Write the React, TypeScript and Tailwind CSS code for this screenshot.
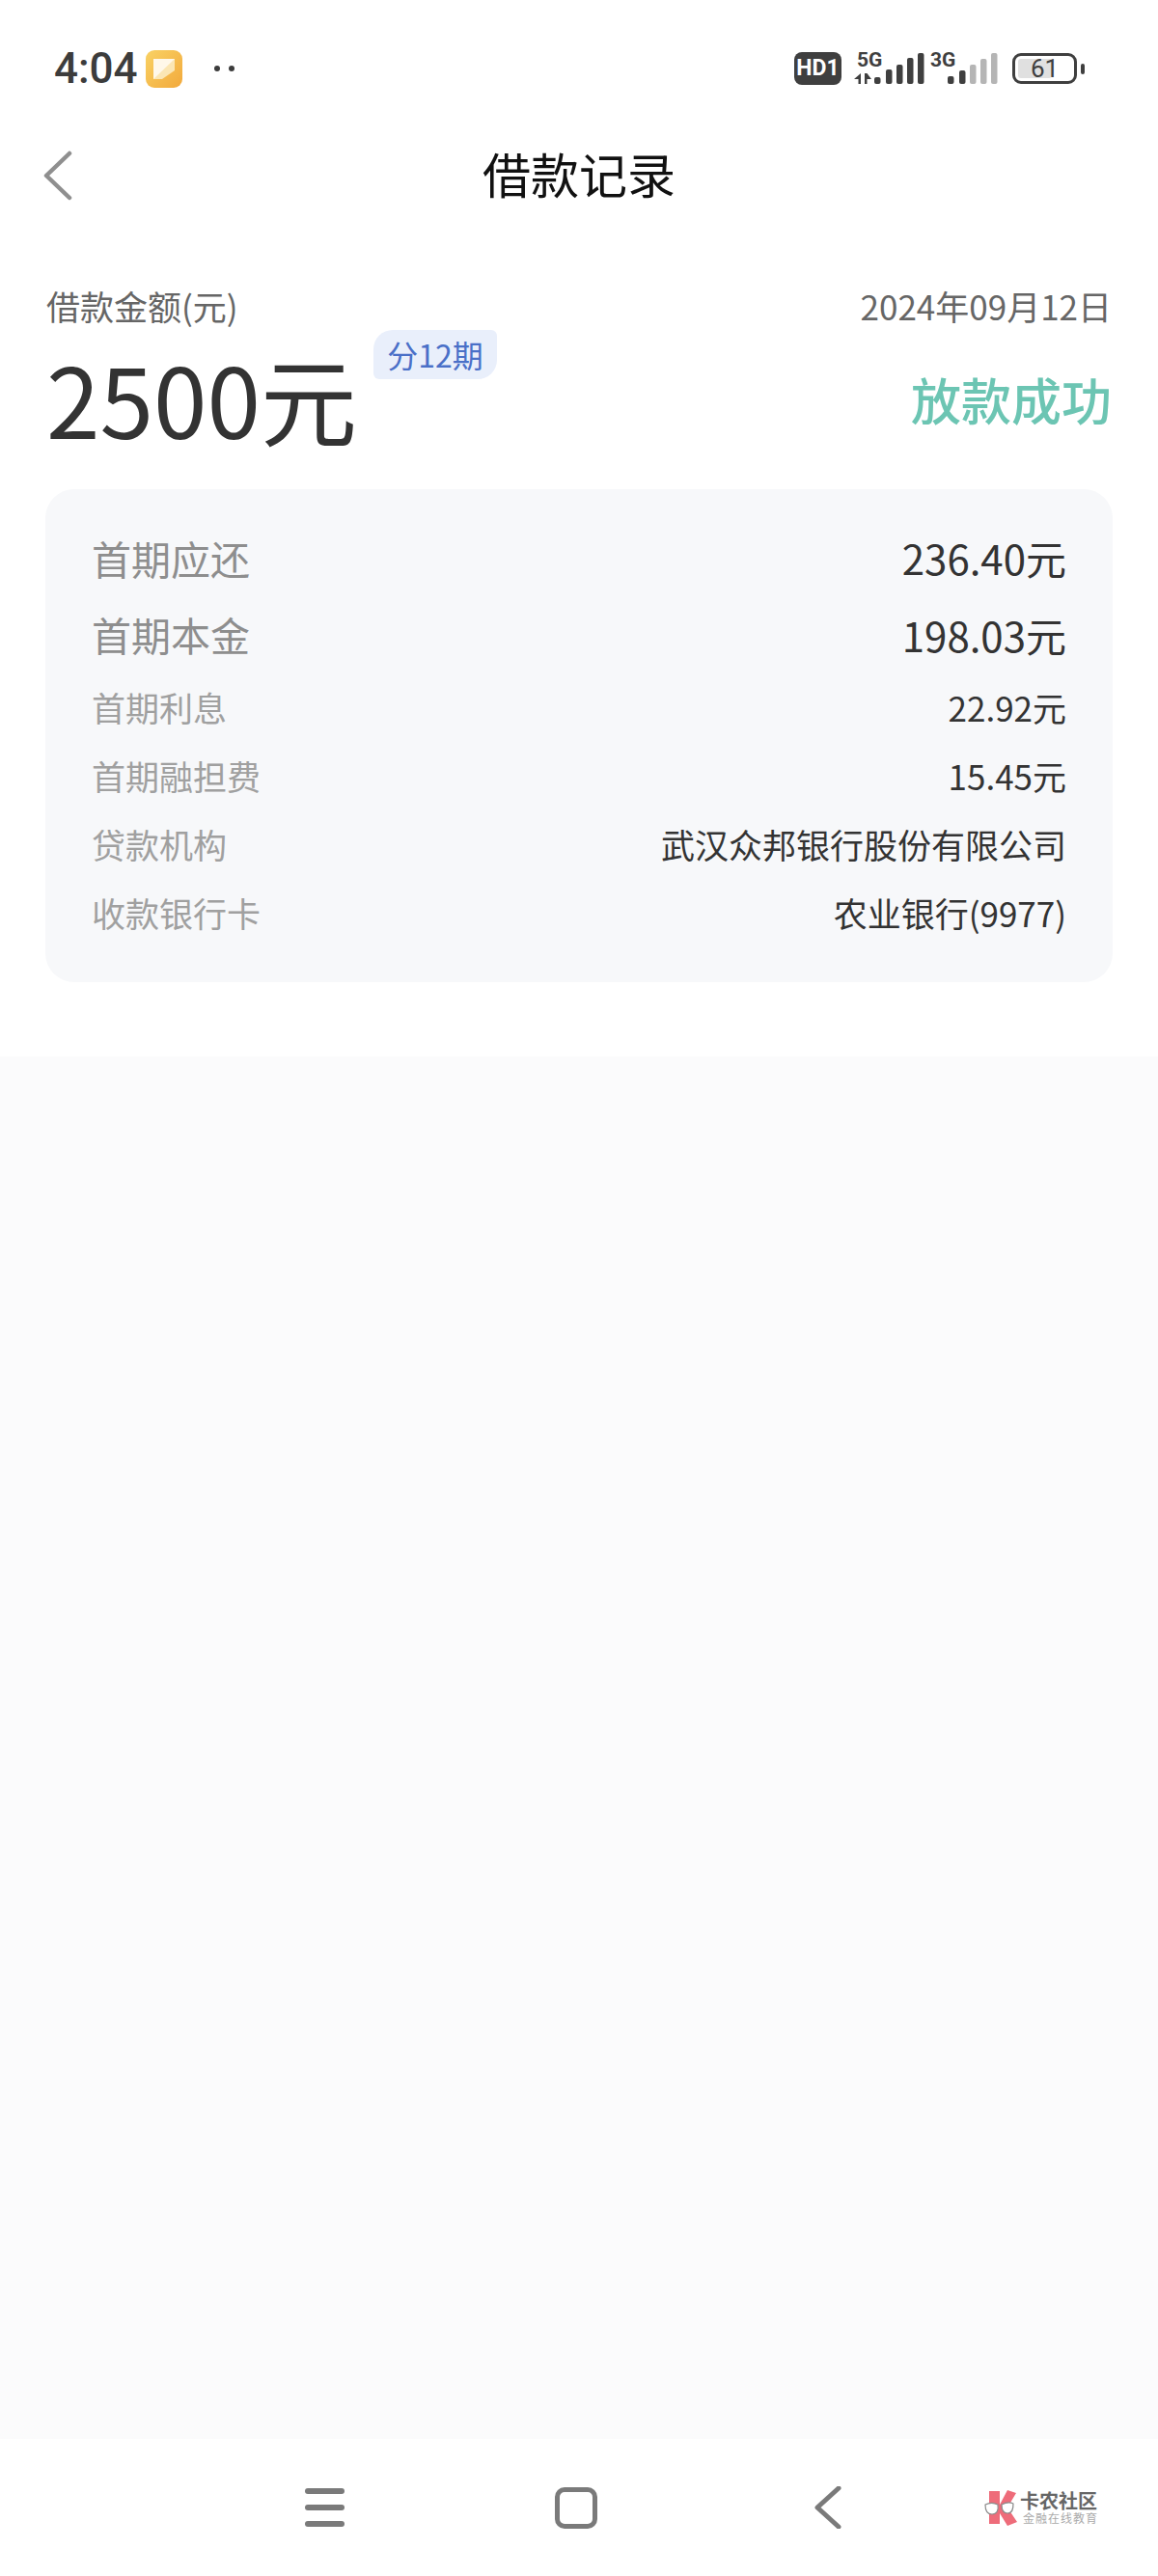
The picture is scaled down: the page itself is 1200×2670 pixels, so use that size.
const font = "font-['Noto_Sans_CJK_SC','Noto_Sans',sans-serif]"

const rows = [
    { label: '首期利息', value: '22.92元' },
    { label: '首期融担费', value: '15.45元' },
    { label: '贷款机构', value: '武汉众邦银行股份有限公司' },
    { label: '收款银行卡', value: '农业银行(9977)' },
]

function NoteIcon() {
    return (
        <svg width="38" height="39" viewBox="0 0 38 39">
            <defs>
                <linearGradient id="noteBg" x1="0" y1="0" x2="1" y2="1">
                    <stop offset="0" stopColor="#f9d264" />
                    <stop offset="1" stopColor="#f2a93c" />
                </linearGradient>
            </defs>
            <rect width="38" height="39" rx="9" fill="url(#noteBg)" />
            <path d="M8 9h22v12L17 30H8z" fill="#fbe6b4" />
            <path d="M8 9h22L8 30z" fill="#fff8ea" />
        </svg>
    )
}

function SignalIcons() {
    const bars5g = [[906, 7], [918, 15], [929, 20], [940, 27], [951, 32]]
    const bars3g = [[982, 8, 1], [994, 14, 1], [1005, 20, 0], [1016, 26, 0], [1027, 32, 0]]
    return (
        <svg width="156" height="40" viewBox="883 52 156 40">
            {bars5g.map(([x, h]) => (
                <rect key={x} x={x} y={88 - h} width="6.5" height={h} rx="2" fill="#3f3f3f" />
            ))}
            {bars3g.map(([x, h, dark]) => (
                <rect key={x} x={x} y={88 - h} width="6.5" height={h} rx="2" fill={dark ? '#3f3f3f' : '#b5b5b5'} />
            ))}
            <path d="M892 77v11h-2.500v-5h-4.500zM896 88V77h2.500l4.500 6h-4.500v5z" fill="#3f3f3f" />
            <text x="888" y="70" fontSize="21" fontWeight="700" fill="#3f3f3f" fontFamily="Roboto, sans-serif">5G</text>
            <text x="964" y="70" fontSize="21" fontWeight="700" fill="#3f3f3f" fontFamily="Roboto, sans-serif">3G</text>
        </svg>
    )
}

function CardooLogo() {
    return (
        <svg width="36" height="37" viewBox="0 0 36 37">
            <path d="M5 1h11v14l8-15 9 3-9 15 10 15-10 4-8-13v11H5z" fill="#ee6c7a" />
            <path d="M1 15c4-2 9-2 13 0 1 6-1 10-6 10-5 0-7-4-7-10zM18 15c4-2 8-3 12-1 0 6-1 10-6 10-4 0-6-4-6-9z" fill="#fff" stroke="#8a8a8a" strokeWidth="1.200" />
        </svg>
    )
}

export default function App() {
    return (
        <div className={`w-[1200px] h-[2670px] flex flex-col bg-white ${font}`}>

            {/* Status bar */}
            <div className="h-[142px] flex items-center pl-[56px] shrink-0">
                <span className="text-[44px] leading-none font-medium text-[#3c3c3c] font-['Roboto',sans-serif]">4:04</span>
                <span className="ml-[8px] flex"><NoteIcon /></span>
                <span className="ml-[33px] w-[6px] h-[6px] rounded-full bg-[#3c3c3c]"></span>
                <span className="ml-[9px] w-[6px] h-[6px] rounded-full bg-[#3c3c3c]"></span>
                <div className="ml-auto flex items-center pr-[76px]">
                    <span className="w-[49px] h-[34px] rounded-[8px] bg-[#3f3f3f] text-white text-[23px] leading-[34px] font-bold text-center font-['Roboto',sans-serif]">HD1</span>
                    <span className="ml-[11px] flex"><SignalIcons /></span>
                    <div className="ml-[10px] w-[67px] h-[32px] rounded-[9px] border-[3px] border-[#3f3f3f] p-[3px] relative flex">
                        <div className="w-[35px] bg-[#e0e0e0] rounded-[3px]"></div>
                        <span className="absolute inset-0 text-center text-[26px] leading-[26px] text-[#3f3f3f] font-['Roboto',sans-serif]">61</span>
                    </div>
                    <span className="ml-[4px] w-[4px] h-[11px] rounded-[2px] bg-[#3f3f3f]"></span>
                </div>
            </div>

            {/* Nav */}
            <div className="h-[74px] grid grid-cols-[1fr_auto_1fr] items-center shrink-0">
                <svg className="ml-[44px] mt-[6px]" width="32" height="52" viewBox="0 0 32 52" fill="none">
                    <path d="M28 3 4 26l24 23" stroke="#8f8f8f" strokeWidth="4.500" strokeLinecap="round" strokeLinejoin="round" />
                </svg>
                <h1 className="text-[50px] leading-none font-normal text-[#111]">借款记录</h1>
            </div>

            {/* Summary */}
            <div className="px-[48px] pt-[82px] shrink-0">
                <div className="flex justify-between items-center h-[36px] text-[35px] leading-none text-[#666]">
                    <span>借款金额(元)</span>
                    <span>2024年09月12日</span>
                </div>
                <div className="flex items-start mt-[8px] h-[165px]">
                    <span className="mt-[20px] text-[100px] leading-none text-[#333]">2500元</span>
                    <span className="ml-[17px] w-[128px] h-[51px] rounded-tl-[20px] rounded-tr-[6px] rounded-bl-[6px] rounded-br-[20px] bg-[#e9effb] text-[#4a70c8] text-[32px] leading-[51px] text-center">分12期</span>
                    <span className="ml-auto mt-[46px] text-[52px] leading-none text-[#6cc5b3] font-medium">放款成功</span>
                </div>
            </div>

            {/* Detail card */}
            <div className="mx-[47px] h-[511px] rounded-[30px] bg-[#f7f8fa] px-[48px] pt-[31px] shrink-0">
                <div className="flex justify-between items-center h-[80px] leading-none">
                    <span className="text-[41px] text-[#8e8e8e]">首期应还</span>
                    <span className="text-[42px] text-[#333]">236.40元</span>
                </div>
                <div className="flex justify-between items-center h-[79px] leading-none">
                    <span className="text-[41px] text-[#8e8e8e]">首期本金</span>
                    <span className="text-[42px] text-[#333]">198.03元</span>
                </div>
                {rows.map((row) => (
                    <div key={row.label} className="flex justify-between items-center h-[71px] text-[35px] leading-none">
                        <span className="text-[#a0a0a0]">{row.label}</span>
                        <span className="text-[#333]">{row.value}</span>
                    </div>
                ))}
            </div>

            <div className="h-[77px] shrink-0"></div>
            <div className="flex-1 bg-[#fbfbfc]"></div>

            {/* System nav */}
            <div className="h-[142px] shrink-0 flex items-center pl-[316px]">
                <div className="w-[41px] flex flex-col gap-[11px]">
                    <span className="h-[6px] rounded-full bg-[#7a7a7a]"></span>
                    <span className="h-[6px] rounded-full bg-[#7a7a7a]"></span>
                    <span className="h-[6px] rounded-full bg-[#7a7a7a]"></span>
                </div>
                <div className="ml-[218px] w-[44px] h-[43px] rounded-[10px] border-[5px] border-[#7a7a7a]"></div>
                <svg className="ml-[225px]" width="28" height="44" viewBox="0 0 28 44" fill="none">
                    <path d="M25 2 3 22l22 20" stroke="#7a7a7a" strokeWidth="5" strokeLinecap="round" strokeLinejoin="round" />
                </svg>
                <div className="ml-[148px] flex items-center">
                    <CardooLogo />
                    <div className="ml-[1px] flex flex-col gap-[4px]">
                        <span className="text-[20px] leading-[17px] font-bold text-[#666]">卡农社区</span>
                        <span className="ml-[3px] text-[12px] leading-[12px] tracking-[1px] text-[#aaa]">金融在线教育</span>
                    </div>
                </div>
            </div>
        </div>
    )
}
